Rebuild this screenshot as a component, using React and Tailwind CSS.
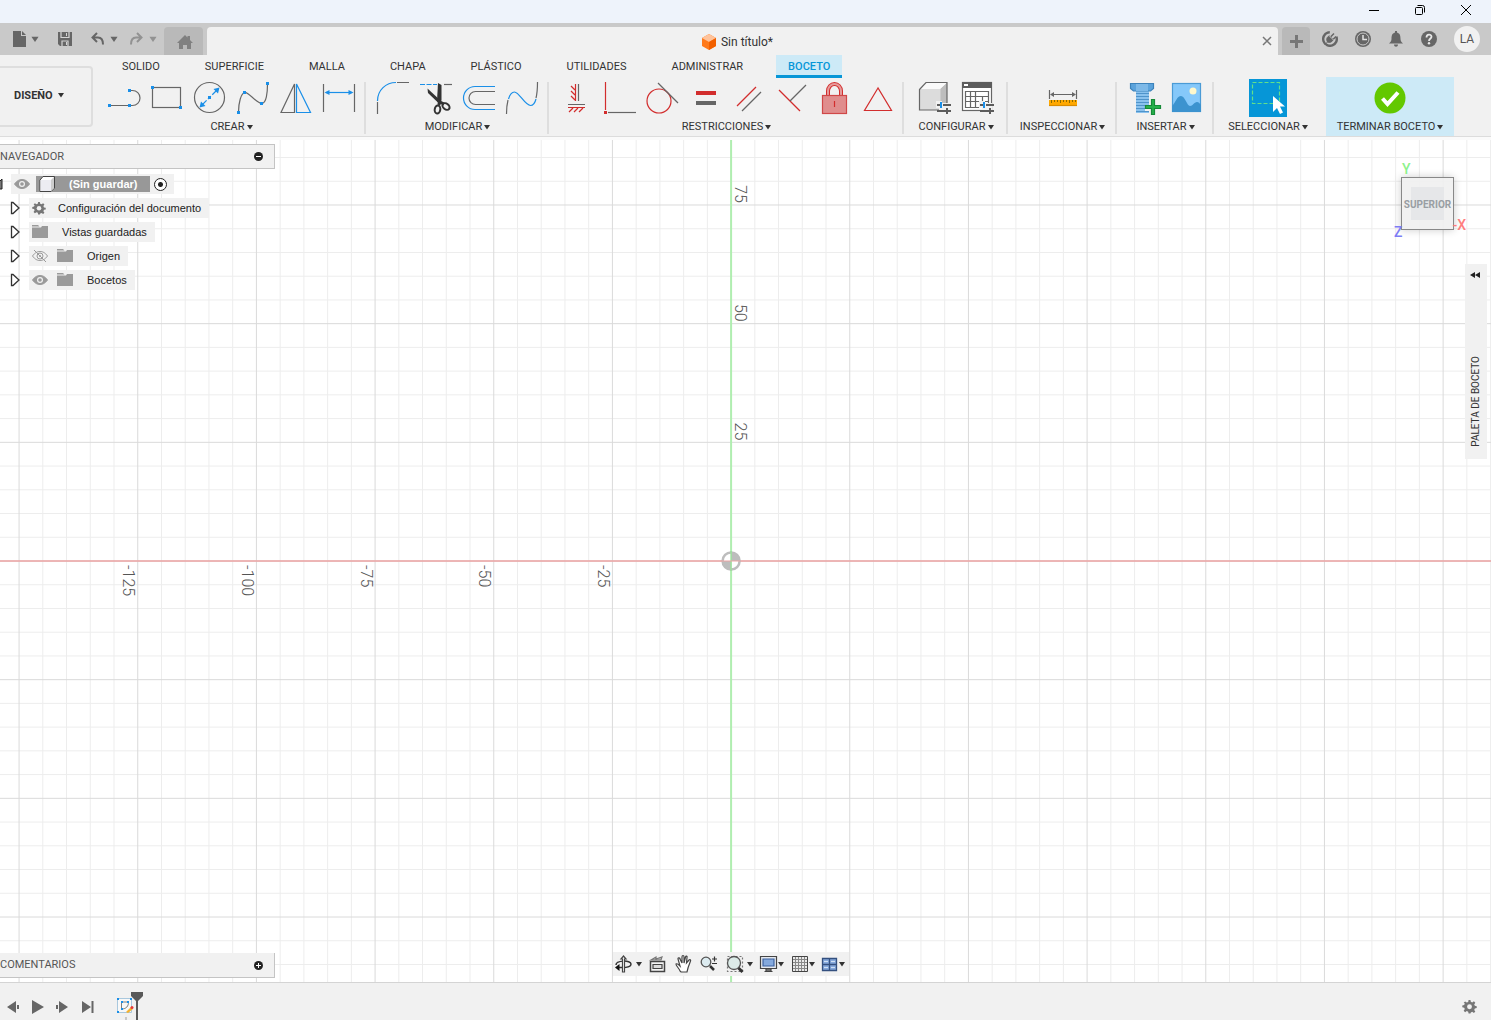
import { useState } from 'react';

const DARK = '#4a4a4a';
const GREY = '#666666';
const BLUE = '#1a8fe8';
const RED = '#d22d2d';

const Icon = ({ children, size = 40 }) => (
  <svg width={size} height={size} viewBox={`0 0 ${size} ${size}`} fill="none" stroke={GREY} strokeWidth="1.2" aria-hidden="true" className="shrink-0">{children}</svg>
);
const Dot = ({ x, y, c = BLUE }) => <rect x={x - 1.5} y={y - 1.5} width="3" height="3" fill={c} stroke="none" />;
const Caret = ({ className = '' }) => (
  <svg width="6" height="5" viewBox="0 0 6 5" aria-hidden="true" className={`shrink-0 ${className}`}><path d="M0 0h6L3 4.5z" fill="currentColor" /></svg>
);
const Sliders = ({ x, y }) => (
  <g transform={`translate(${x} ${y})`} stroke="none">
    <path d="M-1-3h6v2h7v12H2V4h-3z" fill="#f1f1f1" />
    <path d="M0 0h3v2H0zM6 0h8v2H6zM0 6h14v2H0zM9 4h2v6H9z" fill="#5c5c5c" />
    <path d="M3-2h2v6H3z" fill={BLUE} />
  </g>
);

const GROUPS = [
  { label: 'CREAR', width: 'w-[273px] pl-1', tools: [
    ['Línea', <><path d="M5 27.5H25M26 12.5h2.5a7.5 7.5 0 0 1 0 15H26" /><Dot x={5.5} y={27.5} /><Dot x={25.5} y={27.5} /><Dot x={25.5} y={12.5} /></>],
    ['Rectángulo', <><rect x="5.500" y="9.500" width="28" height="20" /><Dot x={5.5} y={9.5} /><Dot x={33.5} y={29.5} /></>],
    ['Círculo', <><circle cx="19.500" cy="19.500" r="15" /><path d="M12 27L27 12" stroke={BLUE} strokeDasharray="6.500 2 4 2 8" /><path d="M29.500 9.500l-1.500 6-4.500-4.500zM9.500 29.500l1.500-6 4.500 4.500z" fill={BLUE} stroke="none" /><Dot x={19.5} y={19.5} /></>],
    ['Spline', <><path d="M5.500 34C5.500 25 8 15.500 11.500 14.500S23.500 25 28.500 25.500S34.500 14 34.500 6" /><Dot x={5.5} y={34.5} /><Dot x={11.5} y={14.5} /><Dot x={28.5} y={25.5} /><Dot x={34.5} y={5.5} /></>],
    ['Simetría', <><path d="M18.500 6V34.500H5z" /><path d="M20.500 6V34.500H34.500z" stroke={BLUE} /></>],
    ['Cota', <><path d="M4.500 6V34M35.500 6V34" /><path d="M7 14.500H33" stroke={BLUE} /><path d="M5.500 14.500l5-2.500v5zM34.500 14.500l-5-2.500v5z" fill={BLUE} stroke="none" /></>],
  ] },
  { label: 'MODIFICAR', width: 'w-[183px]', tools: [
    ['Empalme', <><path d="M4.500 24V36M24 4.500H36" /><path d="M4.500 23C4.500 12 13 4.500 23 4.500" stroke={BLUE} /></>],
    ['Recortar', <><path d="M4 6.500H21" stroke={BLUE} strokeDasharray="5 1.500" /><path d="M28 6.500h8" /><path d="M11.500 10.500L25 23l-1.500 3L12 15z" fill="#333" stroke="none" /><path d="M22 5l3.500 2v15l-1 4-3.500-3z" fill="#333" stroke="none" /><path d="M23.500 22l-.500 5M24 24l4 2" stroke="#333" strokeWidth="3" /><ellipse cx="21.500" cy="31.500" rx="2.800" ry="4" stroke="#333" strokeWidth="2" transform="rotate(8 21.500 31.500)" /><ellipse cx="30" cy="28.500" rx="4" ry="2.800" stroke="#333" strokeWidth="2" transform="rotate(38 30 28.500)" /></>],
    ['Desfase', <><path d="M36 8.500H16a11.500 11.500 0 0 0 0 23H36" stroke={BLUE} /><path d="M36 13.500H16.500a6.500 6.500 0 0 0 0 13H36" /></>],
    ['Curvatura', <><path d="M4.500 36C4.500 30 5 26 6 22M34 20c1-4 1.500-9 1.500-16" /><path d="M6.500 21C8 16 10 14 12.500 14C17 14 23 27.500 28.500 27.500C31 27.500 33 25 34 21" stroke={BLUE} /></>],
  ] },
  { label: 'RESTRICCIONES', width: 'w-[355px]', tools: [
    ['Horizontal/Vertical', <><path d="M22.500 6V23M12 26.500H29" /><path d="M19.500 6V23M12 29.500H29M19 12l-4-4M19 17l-4-4M19 22l-4-4M13 34l4-4M18 34l4-4M23 34l4-4" stroke={RED} /></>],
    ['Coincidente', <><path d="M6.500 4V32" stroke={RED} /><path d="M9 34.500H37" /><Dot x={6.5} y={34.5} c={RED} /></>],
    ['Tangente', <><circle cx="17" cy="23" r="12" stroke={RED} /><path d="M16 5L36 25" /></>],
    ['Igual', <><path d="M11 15H31" stroke={RED} strokeWidth="4" /><path d="M11 25H31" strokeWidth="4" /></>],
    ['Paralelo', <><path d="M9 28L28 9" stroke={RED} /><path d="M14 33L33 14" /></>],
    ['Perpendicular', <><path d="M8 12L29 33" stroke={RED} /><path d="M19 23L35 7" /></>],
    ['Fijar/Desbloquear', <><path d="M14 17V13a6.500 7 0 0 1 13 0v4" stroke={RED} strokeWidth="4" /><path d="M14 17V13a6.500 7 0 0 1 13 0v4" stroke="#e69a9a" strokeWidth="2" /><rect x="8.500" y="17.500" width="24" height="18" fill="#e08d8d" stroke="#d04848" /><path d="M20.500 23v6" stroke={RED} /></>],
    ['Punto medio', <path d="M21 10L7.500 32.500H34.500z" stroke={RED} />],
  ] },
  { label: 'CONFIGURAR', width: 'w-[104px]', tools: [
    ['Configurar modelo', <><path d="M25 11L32 4.500V25L25 32z" fill="#bdbdbd" stroke="none" /><path d="M4.500 11L11 4.500H32L25 11z" fill="#fafafa" stroke="none" /><rect x="4.500" y="11" width="21" height="21" fill="#dcdcdc" stroke="none" /><path d="M4.500 11.500L11 4.500H32V25L25 32H4.500z" /><Sliders x={22} y={26} /></>],
    ['Tabla de configuración', <><rect x="4.500" y="4.500" width="29" height="28" fill="#fff" /><path d="M4 4h30v6H4z" fill="#5c5c5c" stroke="none" /><path d="M6 6h4v2H6z" fill="#fff" stroke="none" /><path d="M7.500 13.500h23v16h-23zM7.500 18.500h23M7.500 23.500h23M12.500 13.500v16M17.500 13.500v16M24.500 18.500v11" /><Sliders x={22} y={26} /></>],
  ] },
  { label: 'INSPECCIONAR', width: 'w-[109px]', tools: [
    ['Medir', <><path d="M6.500 12v9M33.500 12v9M8 16.500h24" /><path d="M7 16.500l4-2.500v5zM33 16.500l-4-2.500v5z" fill={GREY} stroke="none" /><path d="M6 22h28v6H6z" fill="#ffa800" stroke="none" /><path d="M6 27.500h28" stroke="#d98c00" /><path d="M8.500 22v3M11.500 22v2M14.500 22v2M17.500 22v3M20.500 22v2M23.500 22v2M26.500 22v3M29.500 22v2M32.500 22v2" stroke="#8a6900" strokeWidth="1" /></>],
  ] },
  { label: 'INSERTAR', width: 'w-[97px]', tools: [
    ['Insertar componente', <><path d="M12 13h13v22H12z" fill="#8ac2ee" stroke="none" /><path d="M12 15.500h13M12 18.500h13M12 21.500h13M12 24.500h13M12 27.500h13M12 30.500h13M12 33.500h13" stroke="#4f94cb" strokeWidth="1" /><path d="M6.500 5.500h23v5l-3 2.500h-17l-3-2.500z" fill="#5ba3dc" stroke="#3d83bb" /><path d="M12 6h12v7H12z" fill="#7db9e8" stroke="none" /><path d="M27 21h6v6h6v6h-6v6h-6v-6h-6v-6h6z" fill="#f1f1f1" stroke="none" /><path d="M28.500 22.500h3v6h6v3h-6v6h-3v-6h-6v-3h6z" fill="#27b04b" stroke="#168a38" transform="translate(-1 -1)" /></>],
    ['Insertar imagen', <><rect x="5.500" y="5.500" width="28" height="28" fill="#85c8fa" stroke="#4a9bd6" /><circle cx="26" cy="13" r="3.500" fill="#fff8cc" stroke="none" /><path d="M5 28c4-4 5-10 9-10s6 10 9 10 4-4 7-4c2 0 3 2 4 3v7H5z" fill="#3c93cf" stroke="none" /></>],
  ] },
  { label: 'SELECCIONAR', width: 'w-[108px]', last: true, tools: [
    ['Seleccionar', <><path d="M1 1h38v38H1z" fill="#0696d7" stroke="none" /><rect x="4.500" y="4.500" width="27" height="21" stroke="#62e08a" strokeDasharray="4 2" /><path d="M25 18v16l4-4 3 6 3-1.500-3-6h5z" fill="#fff" stroke="none" /></>],
  ] },
];

const TABS = ['SOLIDO', 'SUPERFICIE', 'MALLA', 'CHAPA', 'PLÁSTICO', 'UTILIDADES', 'ADMINISTRAR', 'BOCETO'];

const gearPath = 'M7 1h2l.4 2 1.500.7 1.800-1.200 1.500 1.500-1.200 1.800.7 1.500 2 .4v2l-2 .4-.7 1.500 1.200 1.800-1.500 1.500-1.800-1.200-1.500.7L9 15.500H7l-.4-2-1.500-.7-1.800 1.200-1.500-1.500 1.200-1.800-.7-1.500-2-.4v-2l2-.4.7-1.500L1.800 4.100l1.500-1.500 1.800 1.200 1.500-.7z';
const Gear = ({ size = 16 }) => (
  <svg width={size} height={size} viewBox="0 0 16 16" aria-hidden="true"><path d={gearPath} fill="#767676" /><circle cx="8" cy="8.300" r="2.600" fill="#f1f1f1" /></svg>
);
const Folder = () => (
  <svg width="16" height="14" viewBox="0 0 16 14" fill="#9a9a9a" aria-hidden="true"><path d="M0 0h6l1.500 1.500H0zM0 2.500h9L10 1h6v12H0z" /></svg>
);
const Eye = ({ off }) => (
  <svg width="16" height="12" viewBox="0 0 16 12" fill="none" aria-hidden="true">
    <path d="M.5 6C3 2.500 5.500 1.500 8 1.500S13 2.500 15.500 6C13 9.500 10.500 10.500 8 10.500S3 9.500.5 6z" fill={off ? 'none' : '#9a9a9a'} stroke="#9a9a9a" />
    <circle cx="8" cy="6" r="3" fill={off ? 'none' : '#f1f1f1'} stroke={off ? '#9a9a9a' : 'none'} />
    <circle cx="8" cy="6" r={off ? 1 : 1.800} fill="#9a9a9a" />
    {off && <path d="M2 0l12 12" stroke="#9a9a9a" />}
  </svg>
);
const Expand = () => (
  <svg width="10" height="14" viewBox="0 0 10 14" aria-hidden="true" className="block"><path d="M1.500 1.500h1.500L9 7l-6 5.500H1.500z" fill="#fff" stroke="#333" strokeWidth="1.300" /></svg>
);

const TREE = [
  { name: 'Configuración del documento', icon: <Gear size={14} />, pad: 'pl-[12px]' },
  { name: 'Vistas guardadas', icon: <Folder />, pad: 'pl-[14px]' },
  { name: 'Origen', eye: 'off', icon: <Folder />, pad: 'pl-[14px]' },
  { name: 'Bocetos', eye: 'on', icon: <Folder />, pad: 'pl-[14px]' },
];

const STEP = 118.67;
const range = (n) => Array.from({ length: n * 2 + 1 }, (_, i) => i - n);

function Grid() {
  return (
    <svg className="absolute inset-x-0 top-[3px] bottom-0 w-full h-[calc(100%-3px)]" aria-hidden="true">
      <svg x="49%" y="50%" className="overflow-visible">
        {range(80).filter(i => i % 5).map(i => (
          <path key={i} d={`M${i * STEP / 5 + 0.5}-1500V1500M-2000 ${i * STEP / 5}H2000`} stroke="#ededed" />
        ))}
        {range(16).map(i => (
          <path key={i} d={`M${i * STEP + 0.5}-1500V1500M-2000 ${i * STEP}H2000`} stroke="#dadada" />
        ))}
        <path d="M.5-1500V1500" stroke="#b0eeb0" strokeWidth="2" />
        <path d="M-2000 0H2000" stroke="#eda3a3" strokeWidth="1.300" />
        <g fill="#555" fontFamily="Roboto, sans-serif" fontSize="16" fontWeight="300">
          {[25, 50, 75].map(n => (
            <text key={n} textAnchor="end" transform={`translate(4 ${-n / 25 * STEP - 2}) rotate(90)`}>{n}</text>
          ))}
          {[25, 50, 75, 100, 125].map(n => (
            <text key={n} transform={`translate(${-n / 25 * STEP - 14} 4) rotate(90)`}>{-n}</text>
          ))}
        </g>
        <circle r="8.500" cx=".5" fill="#fff" stroke="#bdbdbd" strokeWidth="2.500" />
        <path d="M.5 0V-9a9 9 0 0 1 9 9zM.5 0V9a9 9 0 0 1-9-9z" fill="#bdbdbd" />
        <path d="M.5-10V10" stroke="#9be09b" strokeWidth="1.500" />
        <path d="M-10 0H10" stroke="#eda3a3" />
      </svg>
    </svg>
  );
}

const VIEW_TOOLS = [
  { name: 'Órbita', caret: 'ml-[2px]', w: 'w-[34px]', art: <><path d="M2 11c0-5 15-5 15-1s-9 4-14 3" stroke="#333" strokeWidth="1.500" /><path d="M1 13.500l4.500-3.500v7z" fill="#111" stroke="none" /><path d="M8.500 18V5H7l2.500-3L12 5h-1.500v13z" fill="#fff" stroke="#444" /></> },
  { name: 'Mirar a', w: 'w-[26px]', art: <><path d="M2.500 7.500h14v10h-14z" fill="#f5f5f5" stroke="#444" strokeWidth="1.500" /><path d="M5 10.500h9v4H5z" fill="#ddd" stroke="#444" /><path d="M3 6l5-3v2l6-2-1 3z" fill="#bbb" stroke="#777" /></> },
  { name: 'Encuadre', w: 'w-[25px]', art: <path d="M6 17c-1-3-4-5-4-7 1-1 2 0 4 2L4 5c0-2 2-1 2 0l2 4V3c0-2 2-2 2 0v6l1.500-6c.5-1.500 2-1 1.500.5L12.500 9 15 6c1-1 2 0 1.500 1-1 3-2 5-2.500 7l-1 4H7z" fill="#fff" stroke="#444" /> },
  { name: 'Zoom', w: 'w-[26px]', art: <><circle cx="7" cy="8" r="4.800" fill="#dcebf0" stroke="#555" strokeWidth="1.300" /><path d="M11 12l4 4" stroke="#333" strokeWidth="2.500" /><path d="M13 5h5M15.500 2.500v5M13 9.500h5" stroke="#333" /></> },
  { name: 'Ajustar', caret: 'ml-[2px]', w: 'w-[34px]', art: <><path d="M2.500 2.500h15v15h-15z" stroke="#777" strokeDasharray="2 2" /><circle cx="9" cy="9" r="6.500" fill="#dcebe8" stroke="#555" strokeWidth="1.300" /><path d="M13.500 14l4 4" stroke="#333" strokeWidth="3" /></> },
  { name: 'Configuración de visualización', caret: '-ml-px', w: 'w-[31px]', art: <><path d="M1.500 2.500h16v12h-16z" fill="#e4e8ee" stroke="#444" /><path d="M4 5h11v7H4z" fill="#84a9dd" stroke="#3c62a0" /><path d="M7 15h5v2H7zM5.500 17.500h8" fill="#999" stroke="#444" /></> },
  { name: 'Rejilla', caret: '-ml-px', w: 'w-[30px]', art: <><path d="M2 2h15v15H2z" fill="#e9e9e9" stroke="none" /><path d="M5.500 2v15M8.500 2v15M11.500 2v15M14.500 2v15M2 5.500h15M2 8.500h15M2 11.500h15M2 14.500h15" stroke="#888" strokeWidth="1" /><path d="M2.500 2.500h15v15h-15z" stroke="#444" strokeWidth="1" /></> },
  { name: 'Ventanas gráficas', caret: '-ml-px', w: 'w-[30px]', art: <><path d="M2.500 4.500h7v6h-7zM9.500 4.500h7v6h-7zM2.500 10.500h7v6h-7zM9.500 10.500h7v6h-7z" fill="#86a9dc" stroke="#34507f" strokeWidth="1.300" /><path d="M4 7.500h4M11 7.500h4M4 13.500h4M11 13.500h4" stroke="#cfe0f5" /></> },
];

const PLAYBACK = [
  ['Retroceder', 'M0 6l9-6v12zM10 4h2v4h-2z'],
  ['Reproducir', 'M0-1l12 7-12 7z'],
  ['Avanzar', 'M-1 4h2v4h-2zM2 0l9 6-9 6z'],
  ['Ir al final', 'M0 0l9 6-9 6zM9.500 0h2v12h-2z'],
];

function TopBar() {
  return (
    <header>
      <div className="h-[23px] bg-[#eef3fb] flex justify-end items-start pr-[2px] text-black">
        <button aria-label="Minimizar" className="w-[46px] h-5 grid place-items-center"><svg width="12" height="12" stroke="currentColor"><path d="M1 6.500h10" /></svg></button>
        <button aria-label="Restaurar" className="w-[46px] h-5 grid place-items-center"><svg width="12" height="12" fill="none" stroke="currentColor"><rect x="1.500" y="3.500" width="7" height="7" rx="1" /><path d="M3.500 1.500h5a2 2 0 0 1 2 2v5" /></svg></button>
        <button aria-label="Cerrar" className="w-[46px] h-5 grid place-items-center"><svg width="12" height="12" stroke="currentColor"><path d="M1 1l10 10M11 1L1 11" /></svg></button>
      </div>
      <div className="h-8 bg-[#c9c9c9] flex items-end text-[#666]">
        <div className="w-[164px] h-full flex items-center pl-[13px] shrink-0">
          <button aria-label="Archivo" className="w-[45px] flex items-center gap-[6px]"><svg width="13" height="16" fill="currentColor"><path d="M0 0h8v5h5v11H0zM9 0l4 4H9z" /></svg><Caret className="scale-125" /></button>
          <button aria-label="Guardar" className="w-[33px] flex"><svg width="14" height="14" fill="currentColor"><path d="M0 0h14v14H2l-2-2z" /><path d="M3 0v5.500h8V0M4 14V9h6v5" fill="none" stroke="#d4d4d4" strokeWidth="1.200" /><path d="M8 10h1v3H8zM8 1h1v3H8z" fill="#d4d4d4" /></svg></button>
          <button aria-label="Deshacer" className="w-[39px] flex items-center gap-[7px]"><svg width="13" height="14" fill="none" stroke="currentColor" strokeWidth="2"><path d="M6 1L1.500 5.500 6 10M2 5.500h5c4 0 5 3 5 7" /></svg><Caret className="scale-125" /></button>
          <button aria-label="Rehacer" className="flex items-center gap-[7px] text-[#929292]"><svg width="13" height="14" fill="none" stroke="currentColor" strokeWidth="2"><path d="M7 1l4.500 4.500L7 10M11 5.500H6c-4 0-5 3-5 7" /></svg><Caret className="scale-125" /></button>
        </div>
        <button aria-label="Inicio" className="w-[39px] h-7 bg-[#b9b9b9] rounded-t grid place-items-center shrink-0 pl-[2px] pt-[2px]"><svg width="16" height="14" fill="#808080"><path d="M8 0l2.500 2.500V1H13v4l3 3h-2v6h-4v-4H6v4H2V8H0z" /></svg></button>
        <div className="flex-1 h-7 ml-1 bg-[#f1f1f1] rounded-t flex items-center pr-[6px]">
          <div className="flex-1 flex items-center justify-center gap-[5px] pl-[6px] pt-[2px] text-xs text-[#333]">
            <svg width="14" height="16" aria-hidden="true"><path d="M7 0l7 4v8l-7 4-7-4V4z" fill="#ff7a1a" /><path d="M7 0l7 4-7 4-7-4z" fill="#ffc39b" /><path d="M7 8l7-4v8l-7 4z" fill="#f26000" /></svg>
            <span>Sin título*</span>
          </div>
          <button aria-label="Cerrar documento" className="w-[10px]"><svg width="10" height="10" stroke="#777" strokeWidth="1.500"><path d="M1 1l8 8M9 1L1 9" /></svg></button>
        </div>
        <button aria-label="Nuevo diseño" className="ml-1 w-7 h-7 bg-[#b9b9b9] rounded-t grid place-items-center shrink-0"><svg width="13" height="13" stroke="#777" strokeWidth="3"><path d="M6.500 0v13M0 6.500h13" /></svg></button>
        <div className="h-full flex items-center pl-3 pr-[11px] gap-[17px] shrink-0">
          <button aria-label="Extensiones"><svg width="16" height="16" className="block"><circle cx="8" cy="8" r="6.800" fill="none" stroke="currentColor" strokeWidth="2.400" strokeDasharray="34 8.700" transform="rotate(-20 8 8)" /><path d="M2.500 14l3-3C4 8 5 6 7.500 4.500l4 4C10 11 8 12 5.500 11" fill="currentColor" stroke="currentColor" /><path d="M8.500 6L12 2.500M11 8.500L14 5.500" stroke="currentColor" strokeWidth="1.500" /><path d="M6 3.500l6 6" stroke="#c9c9c9" strokeWidth="1" /></svg></button>
          <button aria-label="Estado del trabajo"><svg width="16" height="16" className="block"><circle cx="8" cy="8" r="8" fill="currentColor" /><circle cx="8" cy="8" r="6" fill="none" stroke="#c9c9c9" /><path d="M8 4v4.500h4" fill="none" stroke="#e2e2e2" strokeWidth="1.500" /></svg></button>
          <button aria-label="Notificaciones"><svg width="16" height="16" className="block" fill="currentColor"><path d="M7 0h2v1.500c3 1 3.500 3 3.500 6.500 0 2 1 3 2.500 4.500H1C2.500 11 3.500 10 3.500 8 3.500 4.500 4 2.500 7 1.500zM6 13.500h4c0 3-4 3-4 0z" /></svg></button>
          <button aria-label="Ayuda"><svg width="16" height="16" className="block"><circle cx="8" cy="8" r="8" fill="currentColor" /><path d="M5.500 6.500c0-4 5-3.500 5-.8C10.500 7.500 8 7.500 8 10" fill="none" stroke="#e8e8e8" strokeWidth="1.800" /><circle cx="8" cy="12.300" r="1.200" fill="#e8e8e8" /></svg></button>
          <button className="w-[26px] h-[26px] rounded-full bg-[#f1f1f1] text-xs text-[#555]">LA</button>
        </div>
      </div>
    </header>
  );
}

function Ribbon() {
  const [tab, setTab] = useState('BOCETO');
  return (
    <div className="h-[82px] bg-[#f1f1f1] border-b border-[#dcdcdc] flex text-[11px] leading-[14px] text-[#333] shrink-0">
      <button className="mt-[11px] h-[61px] w-[93px] shrink-0 pl-[14px] pb-[2px] flex items-center gap-[5px] font-bold rounded-r border-2 border-l-0 border-[#dedede]">DISEÑO <Caret /></button>
      <div className="flex flex-col min-w-0">
        <nav className="h-[23px] flex pl-[17px] gap-[21px]">
          {TABS.map(t => (
            <button key={t} onClick={() => setTab(t)}
              className={`px-3 h-[23px] whitespace-nowrap ${t === tab ? 'bg-[#cdeaf7] text-[#0696d7] font-medium border-b-3 border-[#0696d7] pt-[3px]' : ''}`}>
              {t}
            </button>
          ))}
        </nav>
        <div className="flex">
          {GROUPS.map(g => (
            <section key={g.label} className={`${g.width} shrink-0 flex flex-col items-center h-[58px] ${g.last ? '' : 'bg-[linear-gradient(#dedede,#dedede)] bg-[length:2px_52px] bg-no-repeat bg-[position:100%_4px]'}`}>
              <div className="flex">
                {g.tools.map(([name, art]) => (
                  <button key={name} title={name} aria-label={name} className="w-[43px] h-10 grid place-items-center"><Icon>{art}</Icon></button>
                ))}
              </div>
              <button className="flex items-center gap-[2px] whitespace-nowrap pt-[2px]">{g.label}<Caret /></button>
            </section>
          ))}
          <section className="ml-1 -mt-px h-[59px] w-[128px] shrink-0 bg-[#cdeaf7] flex flex-col items-center pt-px">
            <button aria-label="Terminar" className="h-10"><Icon><circle cx="20" cy="20" r="15.500" fill="#63c800" stroke="none" /><path d="M12.500 20.500l5 5.500L28 14.500" stroke="#fff" strokeWidth="4" /></Icon></button>
            <button className="flex items-center gap-[2px] whitespace-nowrap pt-[2px]">TERMINAR BOCETO<Caret /></button>
          </section>
        </div>
      </div>
    </div>
  );
}

function Browser() {
  return (
    <aside className="absolute left-0 top-[7px] w-[275px] font-['Liberation_Sans',sans-serif] text-[11px] leading-[14px] text-[#222]">
      <div className="h-[25px] bg-[#f1f1f1] border border-l-0 border-[#c4c4c4] flex items-center justify-between pr-[11px]">
        <h2 className="font-[Roboto,sans-serif] text-[#555]">NAVEGADOR</h2>
        <button aria-label="Contraer"><svg width="9" height="9" className="block"><circle cx="4.500" cy="4.500" r="4.500" fill="#222" /><path d="M2 4.500h5" stroke="#fff" /></svg></button>
      </div>
      <ul className="pt-[3px]">
        <li className="h-6 flex items-center">
          <svg width="3" height="12" className="mr-[8px]" aria-hidden="true"><path d="M0 3l2-2v10H0" fill="#777" stroke="#222" /></svg>
          <div className="h-5 w-[163px] bg-[#f1f1f1] flex items-center pl-[3px]">
            <Eye />
            <div className="ml-[6px] h-4 w-[114px] bg-[#989898] flex items-center pl-[3px] text-white font-bold">
              <svg width="16" height="16" className="mr-[14px]" aria-hidden="true"><path d="M1 4l3-3.500h11.500V12L12 15.500H1z" fill="#fff" stroke="#444" /><path d="M12 4l3-3v11l-3 3z" fill="#ccc" /><path d="M1.500 4H12v11H1.500z" fill="#ececf2" /></svg>
              (Sin guardar)
            </div>
            <input type="radio" defaultChecked aria-label="Activar componente" className="ml-[4px] appearance-none w-[13px] h-[13px] rounded-full border border-[#222] bg-[radial-gradient(circle,#222_2px,#fff_3px)]" />
          </div>
        </li>
        {TREE.map(n => (
          <li key={n.name} className="h-6 flex items-center pl-[10px]">
            <button aria-label={`Expandir ${n.name}`} className="mr-[9px]"><Expand /></button>
            <div className="h-5 bg-[#f1f1f1] flex items-center pl-[3px] pr-[8px]">
              {n.eye && <span className="w-[25px]"><Eye off={n.eye === 'off'} /></span>}
              {n.icon}<span className={n.pad}>{n.name}</span>
            </div>
          </li>
        ))}
      </ul>
    </aside>
  );
}

export default function App() {
  return (
    <div className="h-screen min-w-0 overflow-hidden flex flex-col bg-white font-[Roboto,sans-serif]">
      <TopBar />
      <Ribbon />
      <main className="relative flex-1 overflow-hidden bg-[#fafafa]">
        <div className="absolute inset-x-0 top-[3px] bottom-0 bg-white" />
        <Grid />
        <Browser />

        <div className="absolute right-[37px] top-10 w-[53px] h-[53px] bg-[#efefef]/90 border border-[#888] shadow-[0_0_8px_rgba(0,0,0,0.2)] grid place-items-center pt-[2px] text-[10px] font-bold text-[#999ea3]">
          <span className="absolute inset-[9px] bg-[#e6e7e9]" />
          <button className="relative">SUPERIOR</button>
          <span className="absolute left-0 -top-[16px] text-sm leading-[14px] font-medium text-[#8cf28c]">Y</span>
          <span className="absolute -left-[8px] -bottom-[10px] text-sm leading-[14px] font-medium text-[#7d7df5]">Z</span>
          <span className="absolute -right-[13px] -bottom-[3px] text-sm leading-[14px] font-medium text-[#ff7d7d]">-X</span>
        </div>

        <div className="absolute right-1 top-[127px] w-[22px] h-[195px] bg-[#f1f1f1] flex flex-col items-center justify-between pt-[8px] pb-[12px] text-[#333]">
          <button aria-label="Expandir paleta" className="-ml-[2px]"><svg width="10" height="6" className="block" fill="#222"><path d="M5 0v6L0 3zM10 0v6L5 3z" /></svg></button>
          <span className="[writing-mode:vertical-rl] rotate-180 text-[10px] leading-[14px]">PALETA DE BOCETO</span>
        </div>

        <section className="absolute left-0 bottom-1 w-[275px] h-[25px] bg-[#f1f1f1] border-r border-b border-[#c4c4c4] flex items-center justify-between pr-[11px] pt-px text-[11px] text-[#555]">
          <h2>COMENTARIOS</h2>
          <button aria-label="Añadir comentario"><svg width="9" height="9" className="block"><circle cx="4.500" cy="4.500" r="4.500" fill="#222" /><path d="M2 4.500h5M4.500 2v5" stroke="#fff" /></svg></button>
        </section>

        <div className="absolute bottom-[6px] inset-x-0 flex justify-center pr-[29px]">
          <div className="h-6 bg-[#f1f1f1] flex text-[#333]">
            {VIEW_TOOLS.map(v => (
              <button key={v.name} title={v.name} aria-label={v.name} className={`${v.w} flex items-center pl-px`}>
                <Icon size={20}>{v.art}</Icon>{v.caret && <Caret className={v.caret} />}
              </button>
            ))}
          </div>
        </div>
      </main>

      <footer className="h-[38px] shrink-0 bg-[#f1f1f1] border-t border-[#d4d4d4] flex pl-[7px] pr-[14px]">
        <div className="flex items-center gap-3 pt-[12px] pb-px">
          {PLAYBACK.map(([name, d]) => (
            <button key={name} aria-label={name}><svg width="13" height="12" className="block overflow-visible" fill={GREY}><path d={d} /></svg></button>
          ))}
        </div>
        <button aria-label="Boceto 1" className="ml-[22px] mt-[14px] self-start">
          <svg width="17" height="23" fill="none" className="block">
            <path d="M.5 1.500h14v14H.5z" stroke="#a9c8de" fill="#f8f8f8" /><path d="M4.500 5h7M4.500 5v7c5 0 7-3 7-7" stroke={DARK} strokeWidth=".7" />
            <path d="M0 1h2v2H0zM13 1h2v2h-2zM0 14h2v2H0zM4 4h2v2H4zM4 11h2v2H4zM10 4h2v2h-2z" fill={BLUE} />
            <path d="M9 15l5-5 2 2-5 4z" fill="#f5b22c" /><circle cx="15" cy="10.500" r="1.500" fill="#e63a3a" />
            <path d="M9 20v3" stroke="#c8c8c8" strokeWidth="2" />
          </svg>
        </button>
        <svg width="12" height="28" className="-ml-[3px] mt-[9px]" aria-hidden="true"><path d="M0 0h12v4L7 9v19H5V9L0 4z" fill="#595959" /></svg>
        <button aria-label="Configuración de la cronología" className="ml-auto self-center mt-[10px]"><Gear size={15} /></button>
      </footer>
    </div>
  );
}
